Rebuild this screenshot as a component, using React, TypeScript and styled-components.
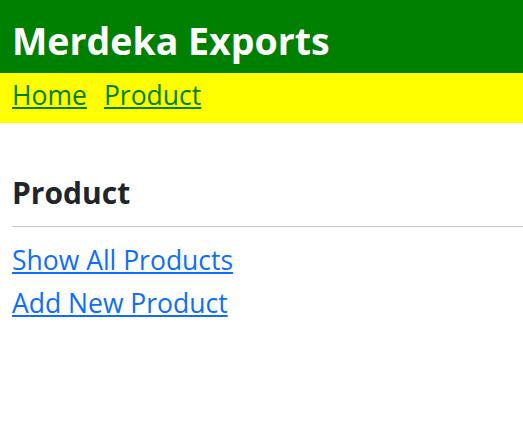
import React from "react";
import styled, { createGlobalStyle } from "styled-components";

const Global = createGlobalStyle`
  html, body { margin: 0; padding: 0; background: #fff; }
  body { font-family: "Open Sans", "Noto Sans", sans-serif; color: #212529; }
`;

const Header = styled.header`
  background: #008000;
  padding: 20px 12px 12px;
`;

const Title = styled.h1`
  margin: 0;
  color: #fff;
  font-size: 37.5px;
  line-height: 41px;
  font-weight: 700;
`;

const Nav = styled.nav`
  background: #ffff00;
  padding: 7px 12px 13px;
  display: flex;
  gap: 17px;
`;

const NavLink = styled.a`
  color: #008000;
  font-size: 26.5px;
  line-height: 30px;
  text-decoration: underline;
`;

const Main = styled.main`
  padding: 52px 0 0 12px;
`;

const Heading = styled.h2`
  margin: 0;
  font-size: 30px;
  line-height: 36px;
  font-weight: 700;
`;

const Rule = styled.hr`
  border: 0;
  border-top: 1px solid #c8c8c8;
  margin: 15px 0 15px;
`;

const LinkList = styled.div`
  display: flex;
  flex-direction: column;
  align-items: flex-start;
  gap: 7px;
`;

const ProductLink = styled.a`
  color: #0d6efd;
  font-size: 26.5px;
  line-height: 36px;
  text-decoration: underline;
`;

export default function App() {
  return (
    <>
      <Global />
      <Header>
        <Title>Merdeka Exports</Title>
      </Header>
      <Nav>
        <NavLink href="#">Home</NavLink>
        <NavLink href="#">Product</NavLink>
      </Nav>
      <Main>
        <Heading>Product</Heading>
        <Rule />
        <LinkList>
          <ProductLink href="#">Show All Products</ProductLink>
          <ProductLink href="#">Add New Product</ProductLink>
        </LinkList>
      </Main>
    </>
  );
}
